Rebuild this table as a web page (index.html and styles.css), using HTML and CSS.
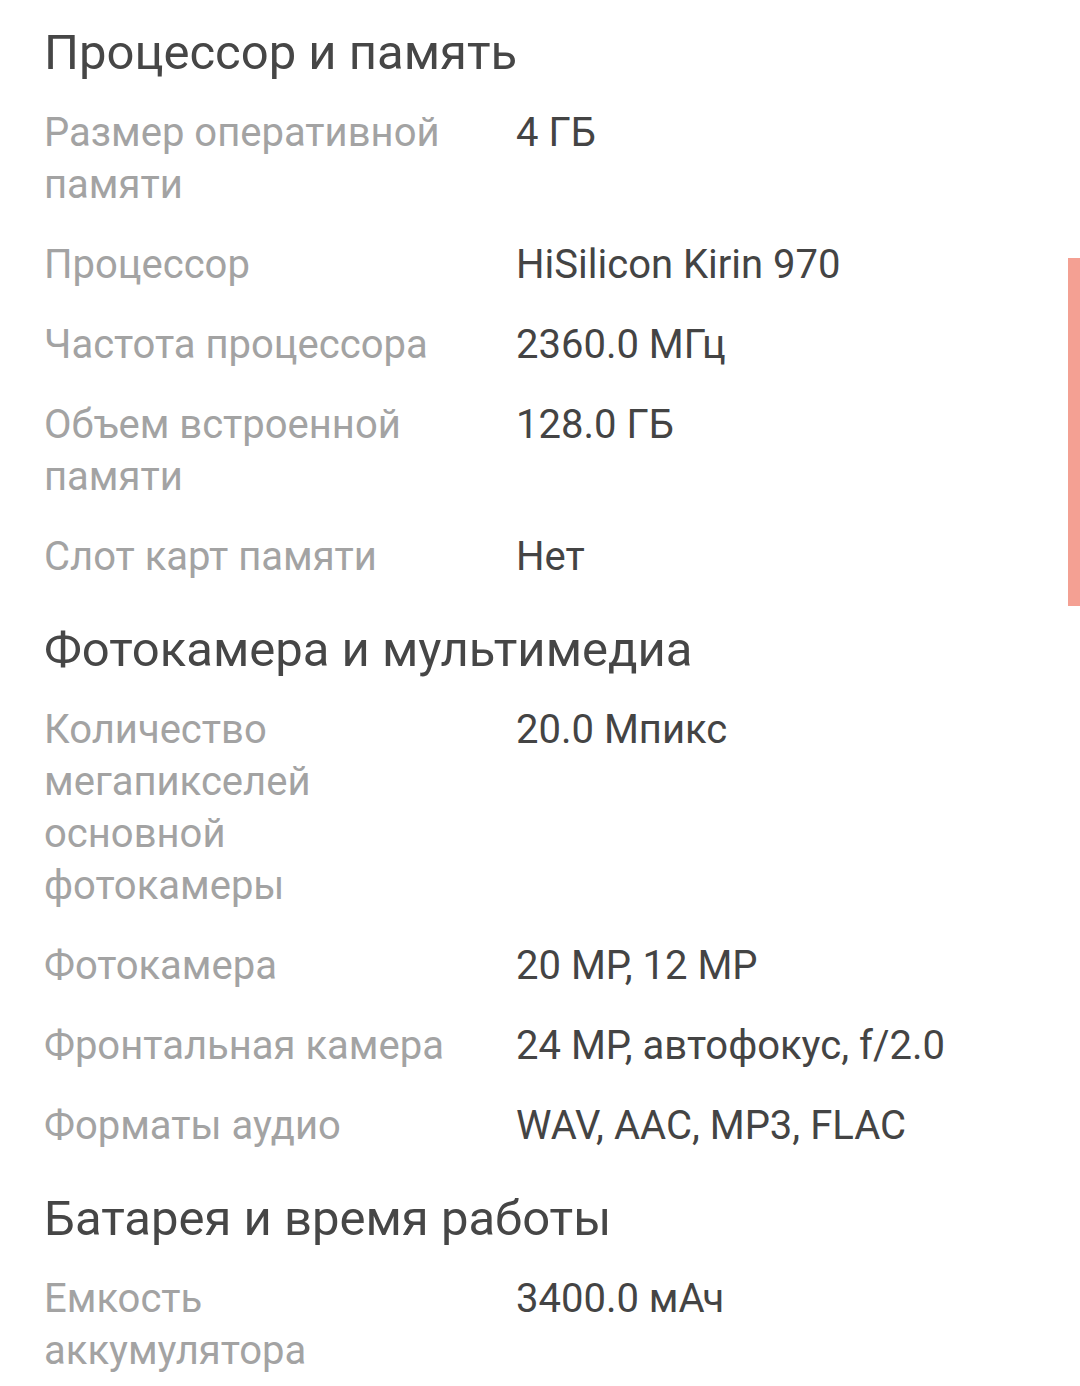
FILE: index.html
```html
<!DOCTYPE html>
<html lang="ru">
<head>
<meta charset="utf-8">
<link rel="stylesheet" href="styles.css">
</head>
<body>
<div class="page">
  <section class="group">
    <h2 class="group-title">Процессор и память</h2>
    <div class="row"><div class="label">Размер оперативной памяти</div><div class="value">4 ГБ</div></div>
    <div class="row"><div class="label">Процессор</div><div class="value">HiSilicon Kirin 970</div></div>
    <div class="row"><div class="label">Частота процессора</div><div class="value">2360.0 МГц</div></div>
    <div class="row"><div class="label">Объем встроенной памяти</div><div class="value">128.0 ГБ</div></div>
    <div class="row"><div class="label">Слот карт памяти</div><div class="value">Нет</div></div>
  </section>
  <section class="group">
    <h2 class="group-title">Фотокамера и мультимедиа</h2>
    <div class="row"><div class="label">Количество мегапикселей основной фотокамеры</div><div class="value">20.0 Мпикс</div></div>
    <div class="row"><div class="label">Фотокамера</div><div class="value">20 MP, 12 MP</div></div>
    <div class="row"><div class="label">Фронтальная камера</div><div class="value">24 MP, автофокус, f/2.0</div></div>
    <div class="row"><div class="label">Форматы аудио</div><div class="value">WAV, AAC, MP3, FLAC</div></div>
  </section>
  <section class="group">
    <h2 class="group-title">Батарея и время работы</h2>
    <div class="row"><div class="label">Емкость аккумулятора</div><div class="value">3400.0 мАч</div></div>
  </section>
</div>
<div class="scrollbar"></div>
</body>
</html>
```

FILE: styles.css
```css
html, body {
  margin: 0;
  padding: 0;
  background: #ffffff;
  overflow: hidden;
}
body {
  width: 1080px;
  height: 1386px;
  font-family: Roboto, "Noto Sans", sans-serif;
  position: relative;
}
.page {
  padding: 0 44px;
}
.group-title {
  margin: 0;
  padding: 23px 0 10px;
  font-size: 49px;
  line-height: 60px;
  font-weight: 400;
  color: #464646;
}
.row {
  display: grid;
  grid-template-columns: 414px 1fr;
  column-gap: 58px;
  padding: 14px 0;
  font-size: 40px;
  line-height: 52px;
}
.label {
  color: #a3a3a3;
}
.value {
  color: #444444;
}
.scrollbar {
  position: absolute;
  right: 0;
  top: 258px;
  width: 12px;
  height: 348px;
  background: #f4a093;
}
```
